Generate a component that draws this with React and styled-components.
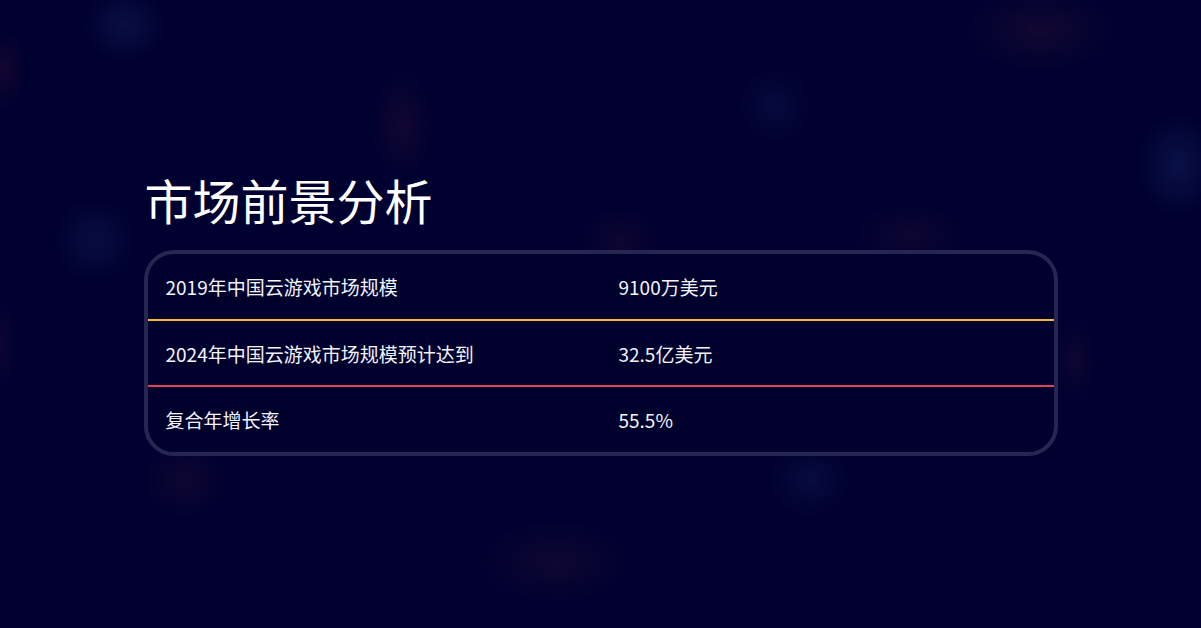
import React from "react";
import styled, { createGlobalStyle } from "styled-components";

const Global = createGlobalStyle`
  html, body { margin: 0; padding: 0; }
  body {
    background: #000030;
    font-family: "Noto Sans CJK SC", "Noto Sans", sans-serif;
    color: #fff;
  }
`;

const Stage = styled.div`
  position: relative;
  width: 1201px;
  height: 628px;
  overflow: hidden;
  background:
    radial-gradient(ellipse 42px 38px at 125px 25px, rgba(30, 50, 110, 0.3), transparent),
    radial-gradient(ellipse 24px 40px at 4px 70px, rgba(90, 30, 50, 0.2), transparent),
    radial-gradient(ellipse 32px 55px at 402px 125px, rgba(70, 25, 55, 0.25), transparent),
    radial-gradient(ellipse 38px 38px at 775px 105px, rgba(25, 40, 100, 0.25), transparent),
    radial-gradient(ellipse 75px 42px at 1040px 30px, rgba(70, 30, 55, 0.25), transparent),
    radial-gradient(ellipse 42px 52px at 1178px 165px, rgba(25, 50, 110, 0.35), transparent),
    radial-gradient(ellipse 42px 42px at 95px 240px, rgba(25, 45, 105, 0.3), transparent),
    radial-gradient(ellipse 42px 32px at 620px 240px, rgba(70, 25, 55, 0.2), transparent),
    radial-gradient(ellipse 55px 32px at 910px 235px, rgba(70, 25, 55, 0.2), transparent),
    radial-gradient(ellipse 22px 42px at 1075px 360px, rgba(70, 25, 55, 0.2), transparent),
    radial-gradient(ellipse 18px 42px at 0px 345px, rgba(70, 25, 55, 0.2), transparent),
    radial-gradient(ellipse 42px 38px at 185px 480px, rgba(70, 25, 55, 0.22), transparent),
    radial-gradient(ellipse 42px 38px at 810px 480px, rgba(25, 40, 100, 0.28), transparent),
    radial-gradient(ellipse 75px 42px at 555px 562px, rgba(70, 30, 55, 0.22), transparent),
    #000030;
  display: flex;
  align-items: center;
  justify-content: center;
`;

const Content = styled.div`
  width: 914px;
  display: flex;
  flex-direction: column;
  margin-top: -6px;
`;

const Title = styled.h1`
  margin: 0 0 18px 1px;
  font-size: 48px;
  font-weight: 400;
  line-height: 66px;
  color: #ffffff;
  letter-spacing: 0;
`;

const Card = styled.div`
  border: 4px solid #262653;
  border-radius: 30px;
  background: #00002c;
  overflow: hidden;
`;

const Table = styled.table`
  width: 100%;
  border-collapse: collapse;
  table-layout: fixed;
`;

const Row = styled.tr`
  border-bottom: ${(p) => (p.$line ? `2px solid ${p.$line}` : "none")};
`;

const Cell = styled.td`
  height: ${(p) => p.$h}px;
  padding: 0 18px;
  font-size: 19px;
  line-height: 1;
  color: #f4f4ff;
  vertical-align: middle;
  box-sizing: border-box;
`;

const rows = [
  { k: "2019年中国云游戏市场规模", v: "9100万美元", line: "#f7b52c", h: 66 },
  { k: "2024年中国云游戏市场规模预计达到", v: "32.5亿美元", line: "#e2415a", h: 66 },
  { k: "复合年增长率", v: "55.5%", line: null, h: 66 },
];

export default function App() {
  return (
    <>
      <Global />
      <Stage>
        <Content>
          <Title>市场前景分析</Title>
          <Card>
            <Table>
              <tbody>
                {rows.map((r) => (
                  <Row key={r.k} $line={r.line}>
                    <Cell $h={r.h}>{r.k}</Cell>
                    <Cell $h={r.h}>{r.v}</Cell>
                  </Row>
                ))}
              </tbody>
            </Table>
          </Card>
        </Content>
      </Stage>
    </>
  );
}
